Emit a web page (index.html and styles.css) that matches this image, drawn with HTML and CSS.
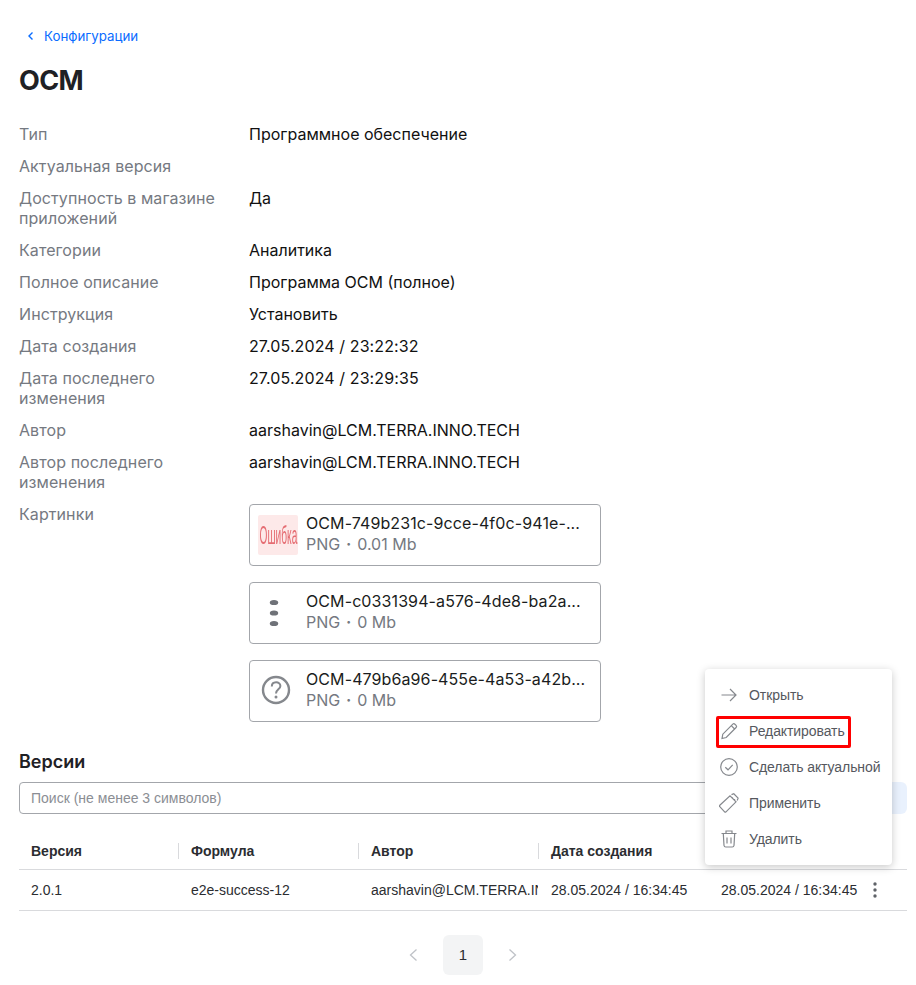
FILE: index.html
```html
<!DOCTYPE html>
<html lang="ru">
<head>
<meta charset="utf-8">
<title>OCM</title>
<link rel="stylesheet" href="styles.css">
</head>
<body>
<main class="page">
  <a class="back" href="#">
    <svg class="back-icon" width="12" height="12" viewBox="0 0 12 12"><path d="M7.500 2.500 4 6l3.500 3.500" fill="none" stroke="#0a6cff" stroke-width="1.400"/></svg>
    Конфигурации
  </a>
  <h1 class="title">OCM</h1>
  <dl class="props">
    <dt>Тип</dt><dd>Программное обеспечение</dd>
    <dt>Актуальная версия</dt><dd></dd>
    <dt>Доступность в магазине приложений</dt><dd>Да</dd>
    <dt>Категории</dt><dd>Аналитика</dd>
    <dt>Полное описание</dt><dd>Программа OCM (полное)</dd>
    <dt>Инструкция</dt><dd>Установить</dd>
    <dt>Дата создания</dt><dd class="date">27.05.2024 / 23:22:32</dd>
    <dt>Дата последнего изменения</dt><dd class="date">27.05.2024 / 23:29:35</dd>
    <dt>Автор</dt><dd>aarshavin@LCM.TERRA.INNO.TECH</dd>
    <dt>Автор последнего изменения</dt><dd>aarshavin@LCM.TERRA.INNO.TECH</dd>
    <dt>Картинки</dt>
    <dd class="files">
      <div class="file">
        <div class="thumb thumb-error"><span class="thumb-word">Ошибка</span></div>
        <div class="file-info">
          <div class="file-name">OCM-749b231c-9cce-4f0c-941e-...</div>
          <div class="file-meta">PNG<span class="dot">·</span>0.01 Mb</div>
        </div>
      </div>
      <div class="file">
        <div class="thumb">
          <svg class="soft" width="40" height="40" viewBox="0 0 40 40"><g fill="#6f7278"><ellipse cx="16" cy="9.500" rx="4.200" ry="2.600"/><ellipse cx="16" cy="20" rx="4.200" ry="2.600"/><ellipse cx="16" cy="30.500" rx="4.200" ry="2.600"/></g></svg>
        </div>
        <div class="file-info">
          <div class="file-name">OCM-c0331394-a576-4de8-ba2a...</div>
          <div class="file-meta">PNG<span class="dot">·</span>0 Mb</div>
        </div>
      </div>
      <div class="file">
        <div class="thumb">
          <svg class="soft" width="40" height="40" viewBox="0 0 40 40"><circle cx="18" cy="19" r="13" fill="none" stroke="#85888d" stroke-width="2.400"/><path d="M13.800 15.500c0-5.500 8.600-5.500 8.600-.5 0 3.300-4.400 3.500-4.400 7.500" fill="none" stroke="#85888d" stroke-width="2"/><circle cx="18" cy="26" r="1.500" fill="#85888d"/></svg>
        </div>
        <div class="file-info">
          <div class="file-name">OCM-479b6a96-455e-4a53-a42b...</div>
          <div class="file-meta">PNG<span class="dot">·</span>0 Mb</div>
        </div>
      </div>
    </dd>
  </dl>

  <section class="versions">
    <h2 class="subtitle">Версии</h2>
    <div class="search-row">
      <input class="search" type="text" placeholder="Поиск (не менее 3 символов)">
      <div class="search-btn"></div>
    </div>
    <table class="grid">
      <thead>
        <tr>
          <th class="c1"><span class="th">Версия</span></th>
          <th class="c2"><span class="th">Формула</span></th>
          <th class="c3"><span class="th">Автор</span></th>
          <th class="c4"><span class="th">Дата создания</span></th>
          <th class="c5"></th>
        </tr>
      </thead>
      <tbody>
        <tr>
          <td>2.0.1</td>
          <td>e2e-success-12</td>
          <td><div class="clip">aarshavin@LCM.TERRA.INNO.TECH</div></td>
          <td>28.05.2024 / 16:34:45</td>
          <td>
            <div class="last-cell">28.05.2024 / 16:34:45
              <svg class="kebab" width="4" height="16" viewBox="0 0 4 16"><g fill="#5f6268"><circle cx="2" cy="2" r="1.700"/><circle cx="2" cy="8" r="1.700"/><circle cx="2" cy="14" r="1.700"/></g></svg>
            </div>
          </td>
        </tr>
      </tbody>
    </table>
    <nav class="pager">
      <svg width="12" height="16" viewBox="0 0 12 16"><path d="M9.500 2.500 3.500 8l6 5.500" fill="none" stroke="#bfc2c7" stroke-width="1.300"/></svg>
      <span class="page-num">1</span>
      <svg width="12" height="16" viewBox="0 0 12 16"><path d="M2.500 2.500 8.500 8l-6 5.500" fill="none" stroke="#bfc2c7" stroke-width="1.300"/></svg>
    </nav>
  </section>

  <ul class="menu">
    <li class="menu-item">
      <svg width="20" height="20" viewBox="0 0 20 20"><path d="M2.500 10h14.500M11 4l6 6-6 6" fill="none" stroke="#85888d" stroke-width="1.200"/></svg>
      Открыть
    </li>
    <li class="menu-item">
      <svg width="20" height="20" viewBox="0 0 20 20"><path d="M3 17.500l.8-4.300L13.800 3.200a1.500 1.500 0 0 1 2.100 0l1.200 1.200a1.500 1.500 0 0 1 0 2.100L7.200 16.500zM12.300 4.700l3.300 3.300" fill="none" stroke="#85888d" stroke-width="1.200"/></svg>
      <span>Редактировать</span>
      <span class="marker"></span>
    </li>
    <li class="menu-item">
      <svg width="20" height="20" viewBox="0 0 20 20"><circle cx="10" cy="10" r="8.300" fill="none" stroke="#85888d" stroke-width="1.200"/><path d="M6.300 10.300l2.700 2.500 4.700-5" fill="none" stroke="#85888d" stroke-width="1.200"/></svg>
      Сделать актуальной
    </li>
    <li class="menu-item">
      <svg width="20" height="20" viewBox="0 0 20 20"><path d="M.8 12.300 11 2.800l6 6L7 18.800a1 1 0 0 1-1.400 0L.8 13.700a1 1 0 0 1 0-1.400zM12.500 1.600l2.300-.8 4.300 4.400-.9 2.300M13 4.300l.8.800M15.200 6.300l.8.800" fill="none" stroke="#85888d" stroke-width="1.200"/></svg>
      Применить
    </li>
    <li class="menu-item">
      <svg width="20" height="20" viewBox="0 0 20 20"><path d="M2.500 4.500h15M7 4.500V2h6v2.500M4.300 4.500l.7 12a1.800 1.800 0 0 0 1.800 1.500h6.400a1.800 1.800 0 0 0 1.800-1.500l.7-12M8 8.500v6M12 8.500v6" fill="none" stroke="#85888d" stroke-width="1.200"/></svg>
      Удалить
    </li>
  </ul>
</main>
</body>
</html>
```
FILE: styles.css
```css
* { box-sizing: border-box; }
html, body { margin: 0; padding: 0; background: #fff; }
body { font-family: Inter, "Liberation Sans", sans-serif; color: #1f2125; overflow: hidden; }
.page { position: relative; width: 916px; height: 985px; padding: 28px 9px 0 19px; }
.back { display: flex; align-items: center; gap: 7px; padding-left: 6px; height: 16px; font-size: 13.300px; line-height: 16px; color: #0a6cff; text-decoration: none; }
.title { margin: 20px 0 0; font-size: 27px; line-height: 34px; letter-spacing: -.6px; font-weight: 700; color: #1f2125; }
.props { display: grid; grid-template-columns: 230px 1fr; row-gap: 12px; margin: 26px 0 0; font-size: 16px; line-height: 20px; }
.props dt { color: #757981; padding-right: 10px; letter-spacing: .08px; }
.props dd { margin: 0; color: #111; }
.props dd.date { letter-spacing: .1px; }
.files { display: flex; flex-direction: column; gap: 16px; }
.file { display: flex; align-items: center; gap: 8px; width: 352px; height: 62px; padding: 0 8px; border: 1px solid #a3a6ab; border-radius: 4px; }
.thumb { width: 40px; height: 40px; flex: none; display: flex; align-items: center; justify-content: center; border-radius: 2px; }
.thumb-error { background: #fde9e9; overflow: hidden; }
.thumb-word { flex: none; font-family: "Liberation Sans", sans-serif; font-size: 26px; color: #e56c72; transform: scaleX(.39); white-space: nowrap; filter: blur(.4px); }
.soft { filter: blur(.5px); }
.file-info { min-width: 0; padding-bottom: 4px; }
.file-name { font-size: 16px; line-height: 20px; letter-spacing: .1px; white-space: nowrap; color: #1a1c20; }
.file-meta { display: flex; margin-top: 1px; font-size: 16px; line-height: 20px; color: #757981; white-space: nowrap; }
.dot { width: 17px; text-align: center; font-weight: 700; }
.versions { margin-top: 30px; }
.subtitle { margin: 0; font-size: 18px; line-height: 20px; font-weight: 600; color: #1f2125; }
.search-row { display: flex; gap: 8px; margin-top: 10px; }
.search { flex: 1; height: 32px; padding: 0 11px; border: 1px solid #a3a6ab; border-radius: 4px; font-family: "Liberation Sans", sans-serif; font-size: 14px; outline: none; }
.search::placeholder { color: #8b8e94; }
.search-btn { width: 120px; height: 32px; border-radius: 6px; background: #e9f1fd; }
.grid { width: 888px; margin-top: 20px; border-collapse: collapse; table-layout: fixed; font-family: "Liberation Sans", sans-serif; font-size: 14px; }
.c1 { width: 160px; }
.c2, .c3 { width: 180px; }
.c4 { width: 170px; }
.grid th { height: 35px; padding: 0; text-align: left; font-family: "Liberation Sans", sans-serif; font-weight: 700; font-size: 14px; color: #2b2d31; border-bottom: 1px solid #d9dadd; }
.th { display: block; margin-left: -1px; padding-left: 12px; line-height: 16px; border-left: 1px solid #d9dadd; }
.c1 .th { margin-left: 0; border-left: 0; }
.grid td { height: 41px; padding: 0 0 0 12px; color: #2b2d31; border-bottom: 1px solid #d9dadd; white-space: nowrap; overflow: hidden; }
.clip { overflow: hidden; white-space: nowrap; margin-right: 1px; }
.last-cell { display: flex; align-items: center; gap: 16px; }
.kebab { flex: none; }
.pager { display: flex; align-items: center; justify-content: center; gap: 24px; margin-top: 24px; width: 888px; }
.page-num { width: 40px; height: 40px; display: flex; align-items: center; justify-content: center; border-radius: 6px; background: #f3f4f5; font-family: "Liberation Sans", sans-serif; font-size: 15px; color: #2b2d31; }
.menu { position: absolute; left: 705px; top: 669px; width: 187px; height: 196px; margin: 0; padding: 8px 0; list-style: none; background: #fff; border-radius: 4px; box-shadow: 0 2px 8px rgba(0,0,0,.22); font-family: "Liberation Sans", sans-serif; font-size: 14px; letter-spacing: -.08px; color: #55585e; }
.menu-item { position: relative; display: flex; align-items: center; gap: 10px; height: 36px; padding-left: 14px; white-space: nowrap; }
.marker { position: absolute; left: 11px; top: 3px; width: 135px; height: 32px; border: 3px solid #f00; border-radius: 2px; }
```
